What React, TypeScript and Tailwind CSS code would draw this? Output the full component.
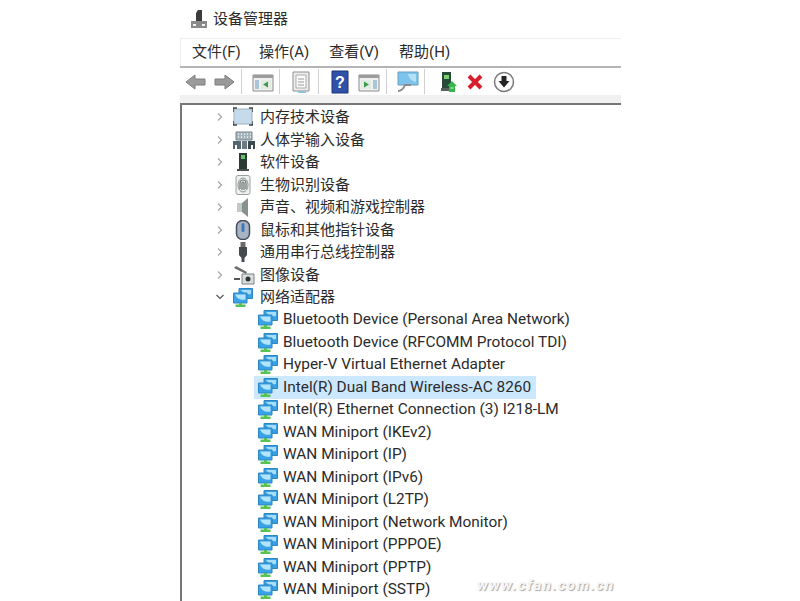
import type { ReactNode } from 'react';

const FONT = 'Roboto, "Noto Sans CJK SC", sans-serif';

function Svg({ w = 20, h = 20, children }: { w?: number; h?: number; children: ReactNode }) {
  return (
    <svg width={w} height={h} viewBox={`0 0 ${w} ${h}`} className="shrink-0">
      {children}
    </svg>
  );
}

// device manager title icon
const TitleIcon = () => (
  <Svg>
    <path d="M2 12h16v7H2z" fill="#8a8a8a" />
    <path d="M4 15h3v2H4zM13 15h3v2h-3z" fill="#f2f2f2" />
    <path d="M7 4l2-3h4v11H7z" fill="#3c3c3c" />
  </Svg>
);

const Back = () => (
  <Svg w={24} h={20}>
    <path d="M2 10l9-7v4h10v6H11v4z" fill="#9a9a9a" stroke="#7c7c7c" />
  </Svg>
);
const Forward = () => (
  <Svg w={24} h={20}>
    <path d="M22 10l-9-7v4H3v6h10v4z" fill="#9a9a9a" stroke="#7c7c7c" />
  </Svg>
);
const PanelLeft = () => (
  <Svg w={22} h={20}>
    <path d="M1 3h20v16H1z" fill="#f0f0f0" stroke="#8c8c8c" />
    <path d="M1 3h20v3H1z" fill="#9c9c9c" />
    <path d="M3 8h4v9H3z" fill="#a9c6d8" />
    <path d="M9 8h10v9H9z" fill="#e2ece2" />
    <path d="M16 9.500v6l-5-3z" fill="#3d9a4a" />
  </Svg>
);
const Sheet = () => (
  <Svg w={20} h={22}>
    <path d="M2 1h16v19H2z" fill="#ececec" stroke="#8f8f8f" />
    <path d="M5 4h10v13H5z" fill="#fafafa" stroke="#adadad" />
    <path d="M7 8h6M7 11h6M7 14h6" stroke="#9a9a9a" />
    <path d="M7 20h8v2H7z" fill="#8fc4dc" />
  </Svg>
);
const Help = () => (
  <Svg w={18} h={24}>
    <path d="M1 1h16v22H1z" fill="#2f51a8" stroke="#1c3478" />
    <text x="9" y="18" textAnchor="middle" fontSize="16" fontWeight="700" fill="#fff" fontFamily="Liberation Sans">?</text>
  </Svg>
);
const PanelRight = () => (
  <Svg w={22} h={20}>
    <path d="M1 3h20v16H1z" fill="#f0f0f0" stroke="#8c8c8c" />
    <path d="M1 3h20v3H1z" fill="#9c9c9c" />
    <path d="M3 8h10v9H3z" fill="#e2ece2" />
    <path d="M15 8h4v9h-4z" fill="#a9c6d8" />
    <path d="M6 9.500v6l5-3z" fill="#3d9a4a" />
  </Svg>
);
const Monitor = () => (
  <Svg w={24} h={22}>
    <path d="M2 1h20v13H2z" fill="#7cc4ee" stroke="#6a9cbc" />
    <path d="M12 3h8v8a10 10 0 0 1-8-8z" fill="#b6e0f6" />
    <path d="M2 20c3 0 5-1 7-6h6" fill="none" stroke="#8a8a8a" strokeWidth="2" />
  </Svg>
);
const Driver = () => (
  <Svg w={20} h={22}>
    <path d="M3 1h9v19H3z" fill="#274a3a" />
    <path d="M5 4h5v4H5z" fill="#7ad06a" />
    <path d="M2 17h10v3H2z" fill="#55605a" />
    <path d="M13 10l5 5h-2v6h-6v-6H8z" fill="#35b54a" />
    <path d="M11.500 17h3" stroke="#d9f5d9" />
  </Svg>
);
const RedX = () => (
  <Svg w={18} h={18}>
    <path d="M3 3l12 12M15 3L3 15" stroke="#d8202c" strokeWidth="4" />
  </Svg>
);
const Down = () => (
  <Svg w={22} h={22}>
    <circle cx="11" cy="11" r="9.500" fill="#fafafa" stroke="#7a7a7a" strokeWidth="1.500" />
    <path d="M8.500 5h5v5h3l-5.500 6.500L5.500 10h3z" fill="#222" />
  </Svg>
);

// tree icons
const Memory = () => (
  <Svg>
    <rect x="1" y="2" width="18" height="15" fill="#c6dbea" stroke="#9fb3c0" />
    <path d="M0 5V1h4M16 1h4v4M20 14v4h-4M4 18H0v-4" fill="none" stroke="#3a444c" strokeWidth="1.500" />
  </Svg>
);
const Hid = () => (
  <Svg w={22}>
    <path d="M3 2h16v8H3z" fill="#a6b4bc" stroke="#77858d" />
    <path d="M5 4h1M8 4h1M11 4h1M14 4h1M17 4h1M5 7h1M8 7h1M11 7h1M14 7h1M17 7h1" stroke="#eef2f4" strokeWidth="1.500" />
    <path d="M0 11h8v8H4v-4H2v4H0z" fill="#55656f" />
    <path d="M9 11h5v8H9z" fill="#6c7a82" />
    <path d="M15 11h7v8h-2v-4h-2v4h-3z" fill="#3c4850" />
  </Svg>
);
const Software = () => (
  <Svg>
    <path d="M6 1h8v16H6z" fill="#2c3a36" />
    <path d="M8 3h4v4H8z" fill="#66c06a" />
    <path d="M4 17h12v2H4z" fill="#4a4f50" />
  </Svg>
);
const Finger = () => (
  <Svg>
    <rect x="3" y="0.500" width="14" height="19" rx="2" fill="#eef0f0" stroke="#9aa0a0" />
    <path d="M7 14V8a3 3 0 0 1 6 0v6M9 15V8a1 1 0 0 1 2 0v7" fill="none" stroke="#6b7270" strokeWidth="1.200" />
    <ellipse cx="10" cy="10" rx="5" ry="7" fill="none" stroke="#8b9290" />
  </Svg>
);
const Speaker = () => (
  <Svg>
    <path d="M4 6h5v9H4z" fill="#c0c8c8" />
    <path d="M9 6l6-5v19l-6-5z" fill="#87918f" />
  </Svg>
);
const Mouse = () => (
  <Svg>
    <rect x="3.500" y="0.500" width="13" height="19" rx="6" fill="#a8b4c4" stroke="#454e5c" strokeWidth="1.500" />
    <rect x="8.500" y="3" width="3" height="9" rx="1.500" fill="#3f78b8" />
  </Svg>
);
const Usb = () => (
  <Svg>
    <path d="M7.500 0h5v5h-5z" fill="#6a6a6a" />
    <path d="M6 5h8v8l-2.500 3v4h-3v-4L6 13z" fill="#454a4e" />
  </Svg>
);
const Imaging = () => (
  <Svg w={22}>
    <path d="M1 3l12 6 1-2L3 1z" fill="#6b6f72" />
    <path d="M1 13h6v2H1z" fill="#555" />
    <path d="M9 9h12v10H9z" fill="#d8dcdc" stroke="#7d8484" />
    <circle cx="15" cy="14" r="2.500" fill="#2d3436" />
  </Svg>
);
const Network = () => (
  <Svg w={20} h={19}>
    <path d="M6 0.500h13.500v10H6z" fill="#39a0e4" stroke="#2c86c4" />
    <path d="M8 2h10v4c-4 1-7 0-10-4z" fill="#a6def8" />
    <path d="M0.500 5h13.500v10H0.500z" fill="#3aa2e6" stroke="#2c86c4" />
    <path d="M2 6.500h10.500v5C8 12.500 4 11 2 6.500z" fill="#b4e4fa" />
    <path d="M6 15h3v2H6zM2.500 16.500h10V19h-10z" fill="#58c254" />
  </Svg>
);

const Chevron = ({ open }: { open?: boolean }) => (
  <svg width="8" height="8" viewBox="0 0 8 8" className="shrink-0">
    <path d={open ? 'M0.500 2l3.500 3.500L7.500 2' : 'M2 0.500L5.500 4 2 7.500'} fill="none" stroke={open ? '#555' : '#a6a6a6'} strokeWidth="1.200" />
  </svg>
);

const categories: { label: string; icon: ReactNode; open?: boolean }[] = [
  { label: '内存技术设备', icon: <Memory /> },
  { label: '人体学输入设备', icon: <Hid /> },
  { label: '软件设备', icon: <Software /> },
  { label: '生物识别设备', icon: <Finger /> },
  { label: '声音、视频和游戏控制器', icon: <Speaker /> },
  { label: '鼠标和其他指针设备', icon: <Mouse /> },
  { label: '通用串行总线控制器', icon: <Usb /> },
  { label: '图像设备', icon: <Imaging /> },
  { label: '网络适配器', icon: <Network />, open: true },
];

const adapters = [
  'Bluetooth Device (Personal Area Network)',
  'Bluetooth Device (RFCOMM Protocol TDI)',
  'Hyper-V Virtual Ethernet Adapter',
  'Intel(R) Dual Band Wireless-AC 8260',
  'Intel(R) Ethernet Connection (3) I218-LM',
  'WAN Miniport (IKEv2)',
  'WAN Miniport (IP)',
  'WAN Miniport (IPv6)',
  'WAN Miniport (L2TP)',
  'WAN Miniport (Network Monitor)',
  'WAN Miniport (PPPOE)',
  'WAN Miniport (PPTP)',
  'WAN Miniport (SSTP)',
];

const Sep = () => <div className="h-[25px] w-px bg-[#d0d0d0]" />;

export default function App() {
  return (
    <div className="relative h-[601px] w-[800px] overflow-hidden bg-white text-[#2b2b2b]" style={{ fontFamily: FONT }}>
      <div className="ml-[180px] flex h-full w-[441px] flex-col">
        {/* Title */}
        <div className="flex h-[38px] shrink-0 items-center gap-[4px] pl-[9px]">
          <TitleIcon />
          <span className="text-[15px]">设备管理器</span>
        </div>

        {/* Menu */}
        <div className="flex h-[28px] shrink-0 items-center gap-[20px] whitespace-nowrap border-t border-l border-[#eeeeee] pl-[11px] text-[15px]">
          <span className="w-[47px]">文件(F)</span>
          <span>操作(A)</span>
          <span>查看(V)</span>
          <span>帮助(H)</span>
        </div>

        {/* Toolbar */}
        <div className="flex h-[29px] shrink-0 items-center border-t-2 border-[#b4b4b4] pl-[4px]">
          <div className="flex items-center gap-[4px] pr-[5px]">
            <Back />
            <Forward />
          </div>
          <Sep />
          <div className="flex items-center pl-[10px] pr-[5px]">
            <PanelLeft />
          </div>
          <Sep />
          <div className="flex items-center pl-[11px] pr-[7px]">
            <Sheet />
          </div>
          <Sep />
          <div className="flex items-center gap-[9px] pl-[12px] pr-[6px]">
            <Help />
            <PanelRight />
          </div>
          <Sep />
          <div className="flex items-center pl-[9px] pr-[4px]">
            <Monitor />
          </div>
          <Sep />
          <div className="flex items-center pl-[14px]">
            <Driver />
            <div className="ml-[7px]">
              <RedX />
            </div>
            <div className="ml-[9px]">
              <Down />
            </div>
          </div>
        </div>
        <div className="h-[8px] shrink-0 bg-[#f0f0f0]" />

        {/* Tree */}
        <div className="min-h-0 flex-1 border-t-2 border-l-2 border-[#767676] pt-[1px]">
          {categories.map((c) => (
            <div key={c.label} className="flex h-[22.5px] items-center pl-[34px] text-[15px]">
              <Chevron open={c.open} />
              <div className="ml-[9px] flex w-[26px]">{c.icon}</div>
              <span className="ml-[1px]">{c.label}</span>
            </div>
          ))}
          {adapters.map((a, i) => (
            <div key={a} className="flex h-[22.5px] items-center pl-[72px] text-[15.4px]">
              <div className={`flex h-full items-center pl-[4px] pr-[5px] ${i === 3 ? 'bg-[#cce8ff]' : ''}`}>
                <Network />
                <span className="ml-[5px]">{a}</span>
              </div>
            </div>
          ))}
        </div>
      </div>

      {/* Watermark */}
      <div className="absolute left-[477px] top-[574px] text-[15px] font-bold italic tracking-[1.4px] text-[#f6f6f6] [text-shadow:1px_1px_1px_#a8a8a8]">
        www.cfan.com.cn
      </div>
    </div>
  );
}
